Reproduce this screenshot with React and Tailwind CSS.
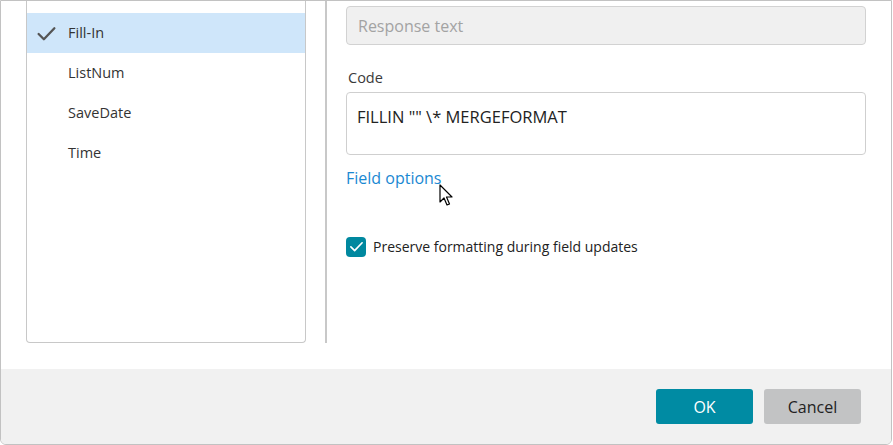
import React from "react";

const font = { fontFamily: '"Open Sans", "Noto Sans", sans-serif' };

const items = ["Fill-In", "ListNum", "SaveDate", "Time"];

const Check = ({ className }) => (
  <svg viewBox="0 0 20 20" className={className} fill="none">
    <path d="M2.5 10.5 L7.5 15.5 L17.5 5" stroke="currentColor" strokeWidth="2.2" strokeLinecap="round" strokeLinejoin="round" />
  </svg>
);

const Cursor = () => (
  <svg width="16" height="24" viewBox="0 0 16 24" className="absolute left-[439px] top-[184px]">
    <path d="M1 1 L1 18 L5 14 L8 21 L10.5 20 L7.5 13 L13 13 Z" fill="white" stroke="black" strokeWidth="1.2" strokeLinejoin="round" />
  </svg>
);

export default function App() {
  return (
    <div className="relative w-[893px] h-[445px] overflow-hidden bg-white" style={font}>
      <div className="w-[892px] h-[445px] flex flex-col border border-[#c2c2c2] rounded-b-[6px] overflow-hidden">
        {/* Main area */}
        <div className="flex h-[368px] pl-[25px]">
          {/* Field list */}
          <div className="w-[280px] h-[342px] border-x border-b border-[#c8c8c8] rounded-b-[4px] pt-[12px]">
            {items.map((it, i) => (
              <div
                key={it}
                className={`h-[40px] flex items-center text-[14.5px] text-[#333] ${i === 0 ? "bg-[#cfe6fa]" : ""}`}
              >
                <div className="w-[31px] pl-[9px] flex">
                  {i === 0 && <Check className="w-[21px] h-[21px] text-[#555]" />}
                </div>
                <span className="ml-[10px]">{it}</span>
              </div>
            ))}
          </div>

          <div className="ml-[19px] w-[2px] h-[342px] bg-[#c8c8c8]" />

          {/* Right panel */}
          <div className="ml-[19px] w-[520px] pt-[5px] flex flex-col">
            <div className="h-[39px] rounded-[4px] border border-[#d2d2d2] bg-[#f0f0f0] flex items-center pl-[11px] text-[16px] text-[#a3a3a3]">
              Response text
            </div>
            <div className="mt-[23px] pl-[2px] text-[14.5px] font-medium text-[#3a3a3a] leading-[20px]">Code</div>
            <div className="mt-[4px] h-[63px] rounded-[4px] border border-[#cfcfcf] bg-white pl-[10px] pt-[13px] text-[16.5px] text-[#222] leading-[22px]">
              FILLIN "" \* MERGEFORMAT
            </div>
            <div className="mt-[12px] text-[16px] text-[#1a88d2] leading-[22px]">Field options</div>
            <div className="mt-[47px] flex items-center h-[21px]">
              <div className="w-[20px] h-[20px] rounded-[4px] bg-[#00889f] flex items-center justify-center">
                <Check className="w-[15px] h-[15px] text-white" />
              </div>
              <span className="ml-[7px] text-[14px] text-[#222]">Preserve formatting during field updates</span>
            </div>
          </div>
        </div>

        {/* Footer */}
        <div className="flex-1 bg-[#f1f1f1] flex justify-end items-start pt-[20px] pr-[30px] gap-[11px]">
          <button className="w-[97px] h-[35px] rounded-[3px] bg-[#008ba3] text-white text-[16px]">OK</button>
          <button className="w-[97px] h-[35px] rounded-[3px] bg-[#c2c3c4] text-[#222] text-[16px]">Cancel</button>
        </div>
      </div>
      <Cursor />
    </div>
  );
}
